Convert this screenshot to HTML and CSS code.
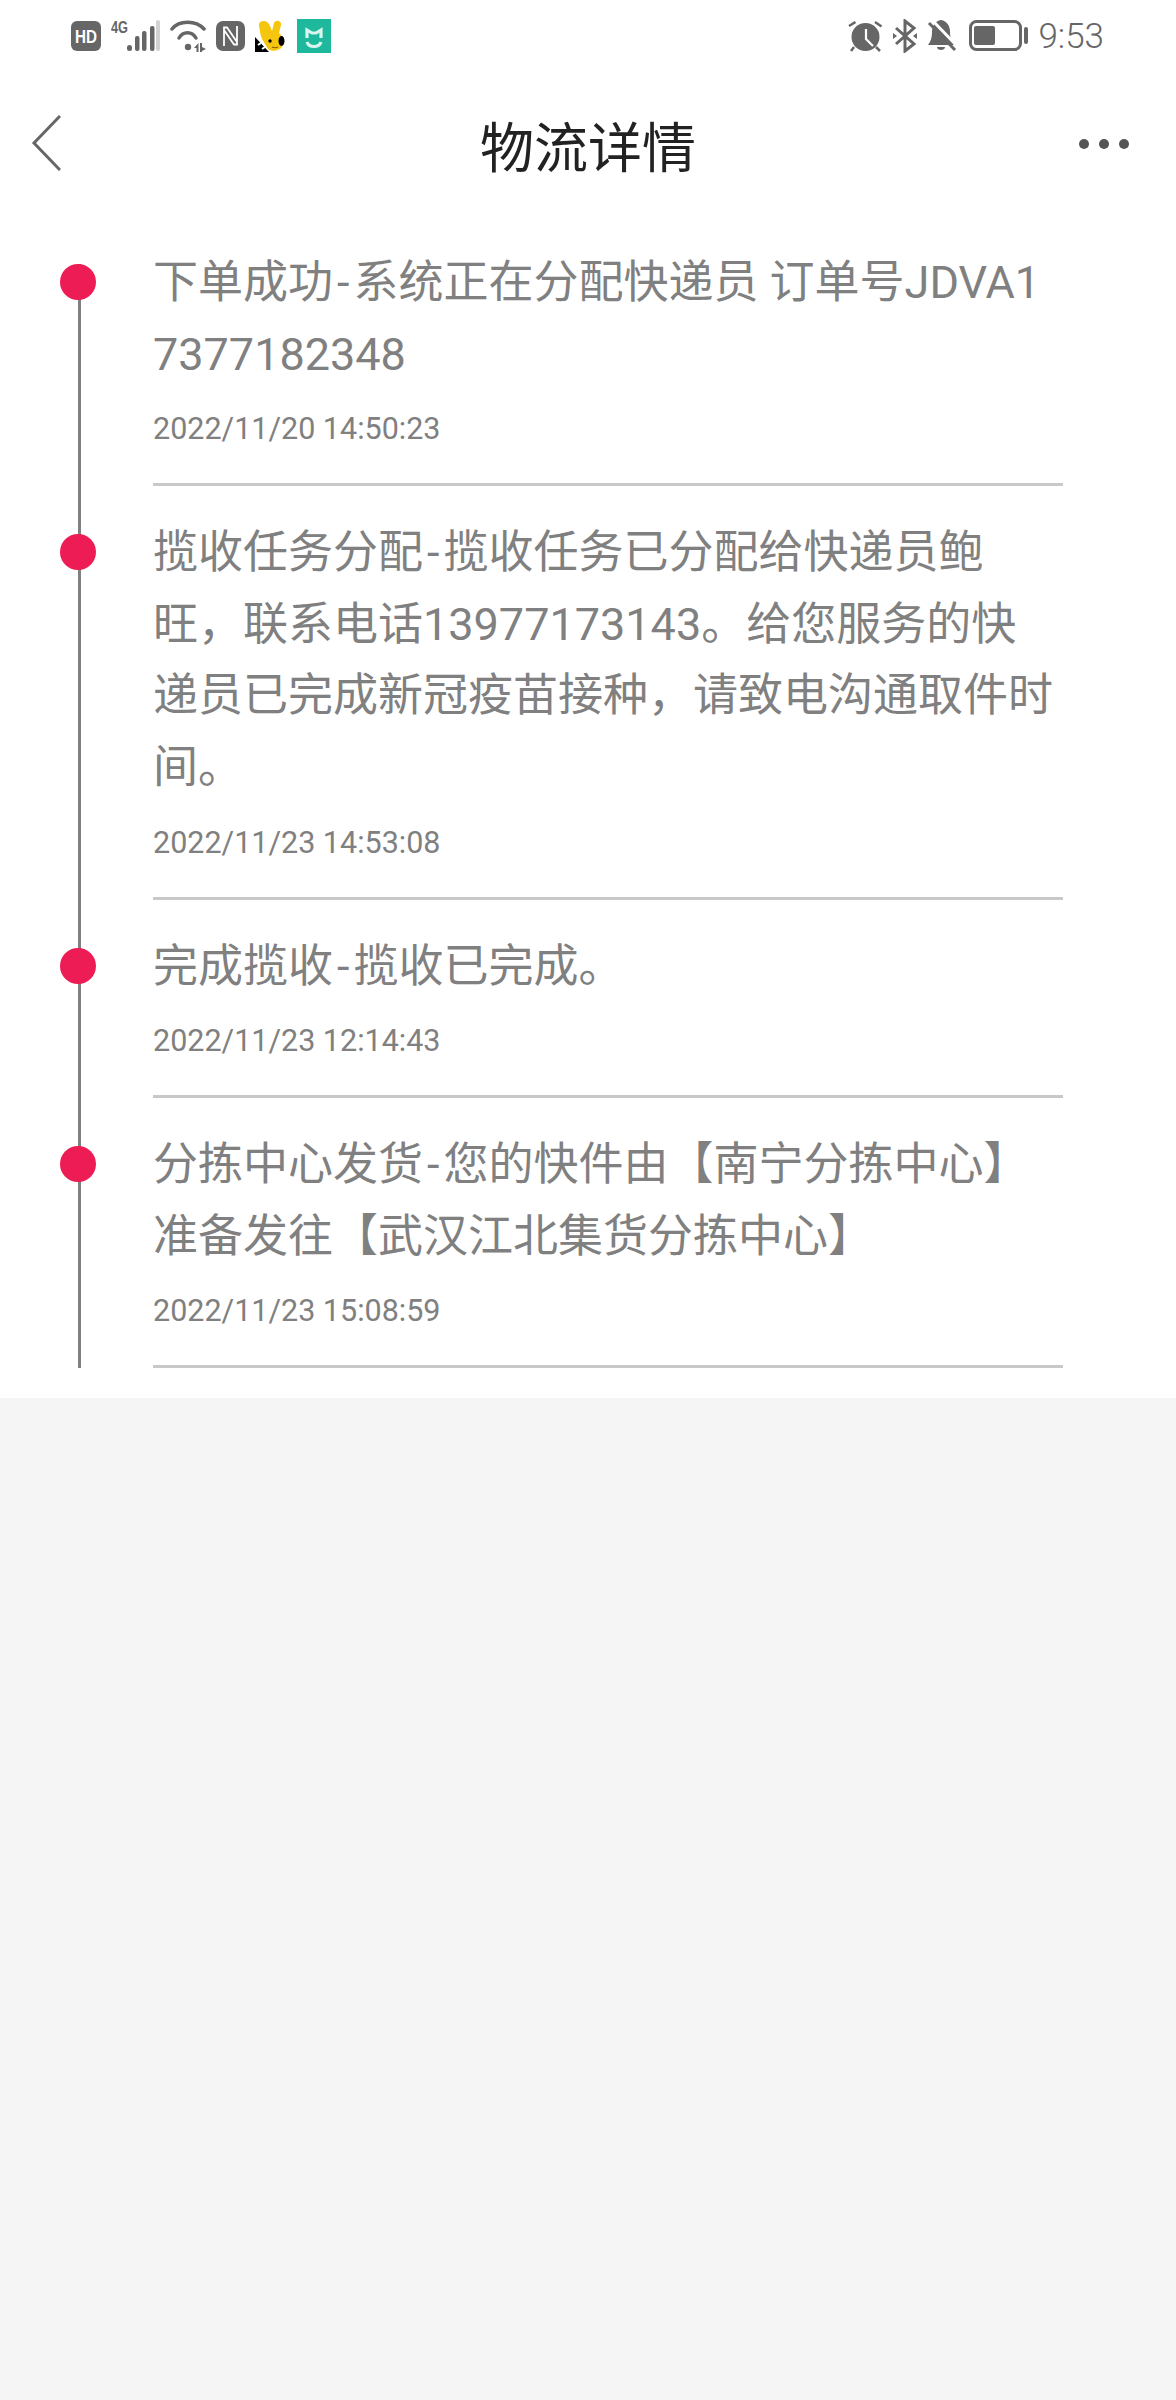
FILE: index.html
```html
<!DOCTYPE html>
<html lang="zh">
<head>
    <meta charset="UTF-8">
    <title>物流详情</title>
    <link rel="stylesheet" href="styles.css">
</head>
<body>
    <div class="status-bar">
        <div class="status-left">
            <svg width="30" height="30" viewBox="0 0 30 30"><rect width="30" height="30" rx="6" fill="#666"/><text x="4" y="21.500" textLength="22" lengthAdjust="spacingAndGlyphs" class="ic-text ic-hd-text">HD</text></svg>
            <svg width="49" height="32" viewBox="0 0 49 32"><text x="0" y="13" textLength="17" lengthAdjust="spacingAndGlyphs" class="ic-text ic-4g">4G</text><g fill="#666"><rect x="16" y="25" width="5" height="6" rx="2.500"/><rect x="24" y="16" width="4.500" height="15" rx="2"/><rect x="31" y="11" width="4.500" height="20" rx="2"/><rect x="39" y="6" width="4.500" height="25" rx="2"/></g><rect x="45" y="0" width="4" height="31" rx="2" fill="#d2d2d2"/></svg>
            <svg width="36" height="32" viewBox="0 0 36 32"><g fill="none" stroke="#666" stroke-width="3.500" stroke-linecap="round"><path d="M2 9C9 0 26 0 34 9"/><path d="M9 18C13 11 22 11 26 18"/></g><circle cx="18" cy="27" r="3.200" fill="#666"/><path d="M24 28l4.500-5v10h-2v-5zM30 23h2v4l4 2-4 2v1h-2z" fill="#666"/></svg>
            <svg width="29" height="30" viewBox="0 0 29 30"><rect width="29" height="30" rx="7" fill="#666"/><path d="M8 25V6.500h3L21 21M21 5v18.500h-3L8 9" fill="none" stroke="#fff" stroke-width="1.800"/></svg>
            <svg width="30" height="32" viewBox="0 0 30 32"><path d="M0 17l14 15H0z" fill="#000"/><path d="M4 6c-1-6 9-7 11 0l2 5 2-8c2-4 8-2 7 2l-2 8c5 4 6 11 2 15-3 3-9 4-13 1L7 19C5 14 5 10 4 6z" fill="#f6c50e"/><ellipse cx="26.500" cy="21" rx="3" ry="5" fill="#000"/><circle cx="15" cy="21" r="1.700" fill="#000"/><path d="M17 27c2 1 4 1 6 0" stroke="#8a5a00" stroke-width="1.200" fill="none"/><path d="M3 25l3-2M7 29l3-2" stroke="#fff" stroke-width="2"/></svg>
            <svg class="ic-mi" width="34" height="34" viewBox="0 0 34 34"><rect width="34" height="34" fill="#1eb89c"/><path d="M10 19v-8l5 3h4l5-3v8M10 23c2 6 12 6 14 0" fill="none" stroke="#d8f5ee" stroke-width="3.200"/></svg>
        </div>
        <div class="status-right">
            <svg width="36" height="32" viewBox="0 0 36 32"><circle cx="18.500" cy="17" r="14" fill="#666"/><path d="M19 9v10l7 7" fill="none" stroke="#fff" stroke-width="2.200"/><path d="M2 6l6.500-4M28 2l6.500 4.500M7 27l-3 4M29 27l4 4" stroke="#666" stroke-width="2.500"/></svg>
            <svg width="24" height="34" viewBox="0 0 24 34"><path d="M3 9l18 16-9 7V2l9 7L3 25" fill="none" stroke="#666" stroke-width="3"/><path d="M0 14l4 3-4 3zM24 14l-4 3 4 3z" fill="#666"/></svg>
            <svg width="30" height="32" viewBox="0 0 30 32"><path d="M14 0c-6 1-9 6-9 12 0 5-1 9-4 13h26c-3-4-4-8-4-13 0-6-3-11-9-12z" fill="#666"/><path d="M10 27h8c0 4-8 4-8 0z" fill="#666"/><path d="M5 0l26 27" stroke="#fff" stroke-width="3"/><path d="M2 3l26 27" stroke="#666" stroke-width="3"/></svg>
            <svg class="ic-battery" width="60" height="32" viewBox="0 0 60 32"><rect x="2.500" y="1.500" width="50" height="28" rx="6" fill="none" stroke="#666" stroke-width="3"/><rect x="6" y="6" width="21" height="19" rx="2" fill="#666"/><rect x="56" y="7" width="4" height="17" rx="2" fill="#666"/></svg>
            <span class="clock">9:53</span>
        </div>
    </div>

    <header class="title-bar">
        <svg class="back" width="30" height="56" viewBox="0 0 30 56"><path d="M29 1L3 28l26 27" fill="none" stroke="#666" stroke-width="3"/></svg>
        <h1>物流详情</h1>
        <div class="more"><i></i><i></i><i></i></div>
    </header>

    <div class="track-list">
        <div class="track-item">
            <div class="rail"><span class="dot"></span></div>
            <div class="track-body">
                <p class="track-text">下单成功<span class="dash">-</span>系统正在分配快递员 订单号JDVA17377182348</p>
                <p class="track-time">2022/11/20 14:50:23</p>
            </div>
        </div>
        <div class="track-item">
            <div class="rail"><span class="dot"></span></div>
            <div class="track-body">
                <p class="track-text">揽收任务分配<span class="dash">-</span>揽收任务已分配给快递员鲍旺，联系电话13977173143。给您服务的快递员已完成新冠疫苗接种，请致电沟通取件时间。</p>
                <p class="track-time">2022/11/23 14:53:08</p>
            </div>
        </div>
        <div class="track-item">
            <div class="rail"><span class="dot"></span></div>
            <div class="track-body">
                <p class="track-text">完成揽收<span class="dash">-</span>揽收已完成。</p>
                <p class="track-time">2022/11/23 12:14:43</p>
            </div>
        </div>
        <div class="track-item">
            <div class="rail"><span class="dot"></span></div>
            <div class="track-body">
                <p class="track-text">分拣中心发货<span class="dash">-</span>您的快件由【南宁分拣中心】准备发往【武汉江北集货分拣中心】</p>
                <p class="track-time">2022/11/23 15:08:59</p>
            </div>
        </div>
    </div>
</body>
</html>
```

FILE: styles.css
```css
body {
    margin: 0;
    min-height: 2400px;
    background: #f5f5f5;
    font-family: Roboto, "Noto Sans CJK SC", sans-serif;
}

.status-bar {
    height: 72px;
    padding: 0 72px 0 71px;
    background: #fff;
    display: flex;
    justify-content: space-between;
    align-items: center;
    box-sizing: border-box;
}

.status-left, .status-right {
    display: flex;
    align-items: center;
    gap: 10px;
}

.ic-text {
    font-family: "Liberation Sans", sans-serif;
    font-weight: 700;
}

.ic-hd-text {
    font-size: 19px;
    fill: #fff;
}

.ic-4g {
    font-size: 16px;
    fill: #666;
}

.ic-mi {
    margin-left: 2px;
}

.ic-battery {
    margin-left: 1px;
}

.clock {
    font-size: 35px;
    font-weight: 300;
    color: #666;
}

.title-bar {
    height: 144px;
    background: #fff;
    padding: 0 47px;
    display: grid;
    grid-template-columns: 1fr auto 1fr;
    align-items: center;
}

.back {
    margin: 0 0 2px -16px;
}

.title-bar h1 {
    margin: 0;
    font-size: 54px;
    font-weight: 400;
    color: #222;
    font-family: "Noto Sans CJK SC", sans-serif;
}

.more {
    display: flex;
    justify-content: flex-end;
    gap: 10px;
}

.more i {
    width: 10px;
    height: 10px;
    border-radius: 50%;
    background: #555;
}

.track-list {
    background: #fff;
    padding: 0 113px 30px 60px;
}

.track-item {
    display: flex;
}

.rail {
    width: 36px;
    margin-right: 57px;
    background: linear-gradient(#808080, #808080) 18px 0 / 3px 100% no-repeat;
}

.track-item:first-child .rail {
    margin-top: 48px;
}

.dot {
    display: block;
    width: 36px;
    height: 36px;
    margin-top: 48px;
    border-radius: 50%;
    background: #ed1c55;
}

.track-item:first-child .dot {
    margin-top: 0;
}

.track-body {
    flex: 1;
    padding-top: 31px;
    border-bottom: 3px solid #c8c8c8;
}

.track-text {
    margin: 0;
    padding-right: 6px;
    font-size: 45px;
    line-height: 71.6px;
    color: #808080;
    word-break: break-all;
}

.dash {
    margin: 0 4px;
}

.track-time {
    margin: 0;
    padding: 19px 0 34px;
    font-size: 30.5px;
    line-height: 40px;
    color: #808080;
}
```
